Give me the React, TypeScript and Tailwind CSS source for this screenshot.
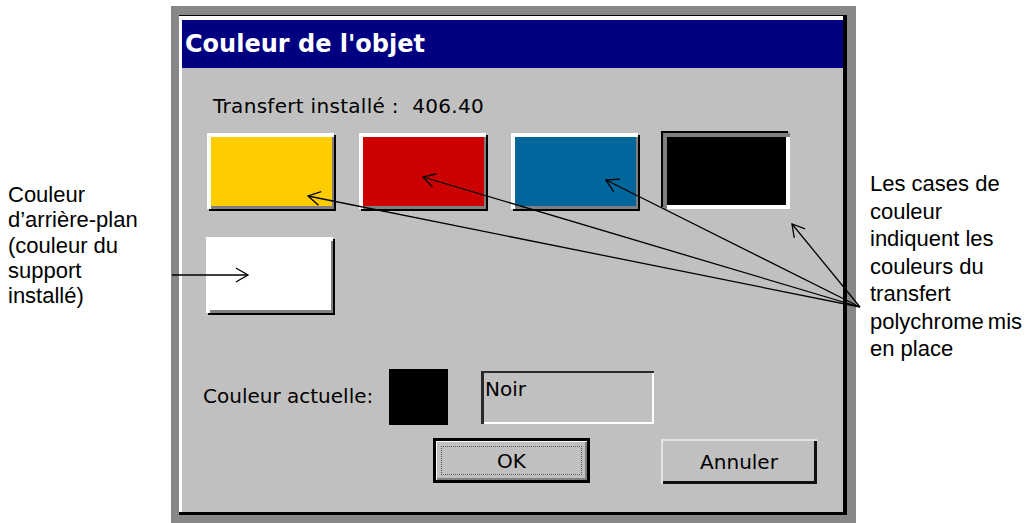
import clsx from "clsx";

type Pt = [number, number];

const HUB: Pt = [860, 307];

function Arrow({ from, to }: { from: Pt; to: Pt }) {
  const [x1, y1] = from;
  const [x2, y2] = to;
  const a = Math.atan2(y1 - y2, x1 - x2);
  const len = 14;
  const spread = Math.PI / 6;
  const w1: Pt = [x2 + len * Math.cos(a - spread), y2 + len * Math.sin(a - spread)];
  const w2: Pt = [x2 + len * Math.cos(a + spread), y2 + len * Math.sin(a + spread)];
  return (
    <g>
      <line x1={x1} y1={y1} x2={x2} y2={y2} />
      <polyline points={`${w1[0]},${w1[1]} ${x2},${y2} ${w2[0]},${w2[1]}`} fill="none" />
    </g>
  );
}

/** Raised colour box; the pressed one is the current colour. */
function Swatch({ className, pressed }: { className: string; pressed?: boolean }) {
  return (
    <div
      className={clsx(
        "w-[127px] h-[76px] shrink-0",
        pressed
          ? "shadow-[inset_4px_4px_0_#7f7f7f,inset_-4px_-4px_0_#fff,-2px_-2px_0_#000]"
          : "shadow-[inset_4px_4px_0_#fff,inset_-2px_-3px_0_#7f7f7f,2px_2px_0_#000]",
        className,
      )}
    />
  );
}

export default function App() {
  return (
    <div className="relative w-[1028px] h-[523px] bg-white overflow-hidden flex items-start text-black">
      {/* left callout */}
      <div className="w-[171px] shrink-0 pl-[8px] pt-[182px] font-['Liberation_Sans',Arial,sans-serif] text-[22px] leading-[25.25px]">
        Couleur
        <br />
        d’arrière-plan
        <br />
        (couleur du
        <br />
        support
        <br />
        installé)
      </div>

      {/* dialog frame */}
      <div className="w-[685px] h-[517px] mt-[6px] shrink-0 bg-[#888888] pl-[8px] pt-[9px] pr-[9px] pb-[8px]">
        <div className="h-full border-t border-r-[4px] border-b-[3px] border-black">
          <div className="h-full flex flex-col border-t-[4px] border-l-[3px] border-white bg-[#c0c0c0] font-['DejaVu_Sans',Verdana,sans-serif]">
            <div className="h-[48px] shrink-0 bg-[#000080] flex items-center pl-[3px] text-white font-bold text-[24px] leading-none">
              Couleur de l'objet
            </div>

            <div className="flex flex-col pt-[26px]">
              <div className="ml-[31px] text-[20px] leading-[24px] tracking-[0.3px] whitespace-pre">Transfert installé :  406.40</div>

              <div className="flex gap-[25px] ml-[25px] mt-[15px]">
                <Swatch className="bg-[#ffcc00]" />
                <Swatch className="bg-[#cc0000]" />
                <Swatch className="bg-[#00669c]" />
                <Swatch className="bg-black" pressed />
              </div>

              <div className="flex ml-[24px] mt-[28px]">
                <Swatch className="bg-white" />
              </div>

              <div className="flex items-start ml-[21px] mt-[56px]">
                <div className="w-[186px] mt-[15px] text-[20px] leading-[24px]">Couleur actuelle:</div>
                <div className="w-[59px] h-[56px] bg-black" />
                <div className="ml-[33px] mt-[2px] w-[173px] h-[53px] shadow-[inset_3px_2px_0_#2a2a2a,inset_-2px_-2px_0_#fff] pl-[4px] pt-[6px] text-[20px] leading-[24px]">
                  Noir
                </div>
              </div>

              <div className="flex items-start ml-[251px] mt-[13px] text-[20px] leading-none">
                <div className="w-[157px] h-[45px] border-[3px] border-black p-[5px] shadow-[inset_1px_1px_0_#fff,inset_-2px_-2px_0_#808080]">
                  <div className="h-full border border-dotted border-[#555] flex items-center justify-center">OK</div>
                </div>
                <div className="ml-[71px] mt-[1px] w-[156px] h-[45px] flex items-center justify-center shadow-[inset_2px_2px_0_#e4e4e4,inset_-3px_-3px_0_#111]">
                  Annuler
                </div>
              </div>
            </div>
          </div>
        </div>
      </div>

      {/* right callout */}
      <div className="pl-[14px] pt-[170px] font-['Liberation_Sans',Arial,sans-serif] text-[22px] leading-[27.5px] whitespace-nowrap">
        Les cases de
        <br />
        couleur
        <br />
        indiquent les
        <br />
        couleurs du
        <br />
        transfert
        <br />
        polychrome<span className="tracking-[-2px]"> </span>mis
        <br />
        en place
      </div>

      <svg className="absolute inset-0 pointer-events-none" width={1028} height={523} stroke="#000" strokeWidth={1.3}>
        <Arrow from={[172, 275]} to={[248, 275]} />
        <Arrow from={HUB} to={[308, 196]} />
        <Arrow from={HUB} to={[423, 177]} />
        <Arrow from={HUB} to={[606, 180]} />
        <Arrow from={HUB} to={[792, 224]} />
      </svg>
    </div>
  );
}
